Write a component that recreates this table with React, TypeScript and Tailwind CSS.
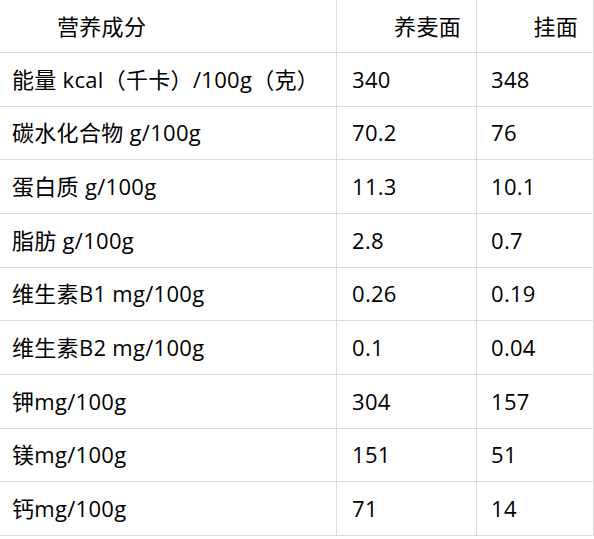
import React from "react";

const rows: [string, string, string][] = [
  ["能量 kcal（千卡）/100g（克）", "340", "348"],
  ["碳水化合物 g/100g", "70.2", "76"],
  ["蛋白质 g/100g", "11.3", "10.1"],
  ["脂肪 g/100g", "2.8", "0.7"],
  ["维生素B1 mg/100g", "0.26", "0.19"],
  ["维生素B2 mg/100g", "0.1", "0.04"],
  ["钾mg/100g", "304", "157"],
  ["镁mg/100g", "151", "51"],
  ["钙mg/100g", "71", "14"],
];

export default function App() {
  return (
    <div
      className="w-[594px] h-[539px] bg-white text-[22px] text-black tracking-[0.3px]"
      style={{ fontFamily: '"Open Sans", "Noto Sans CJK SC", sans-serif' }}
    >
      <div className="flex h-[53px] border-b border-[#dcdcdc]">
        <div className="w-[336px] flex items-center pl-[57px]">营养成分</div>
        <div className="w-[140px] border-l border-[#dcdcdc] flex items-center justify-end pr-[15px]">
          养麦面
        </div>
        <div className="w-[118px] border-l border-r border-[#dcdcdc] flex items-center justify-end pr-[15px]">
          挂面
        </div>
      </div>
      {rows.map((r, i) => (
        <div key={i} className="flex h-[53.67px] border-b border-[#dcdcdc]">
          <div className="w-[336px] flex items-center pl-[12px] whitespace-nowrap">{r[0]}</div>
          <div className="w-[140px] border-l border-[#dcdcdc] flex items-center pl-[15px]">
            {r[1]}
          </div>
          <div className="w-[118px] border-l border-r border-[#dcdcdc] flex items-center pl-[14px]">
            {r[2]}
          </div>
        </div>
      ))}
    </div>
  );
}
